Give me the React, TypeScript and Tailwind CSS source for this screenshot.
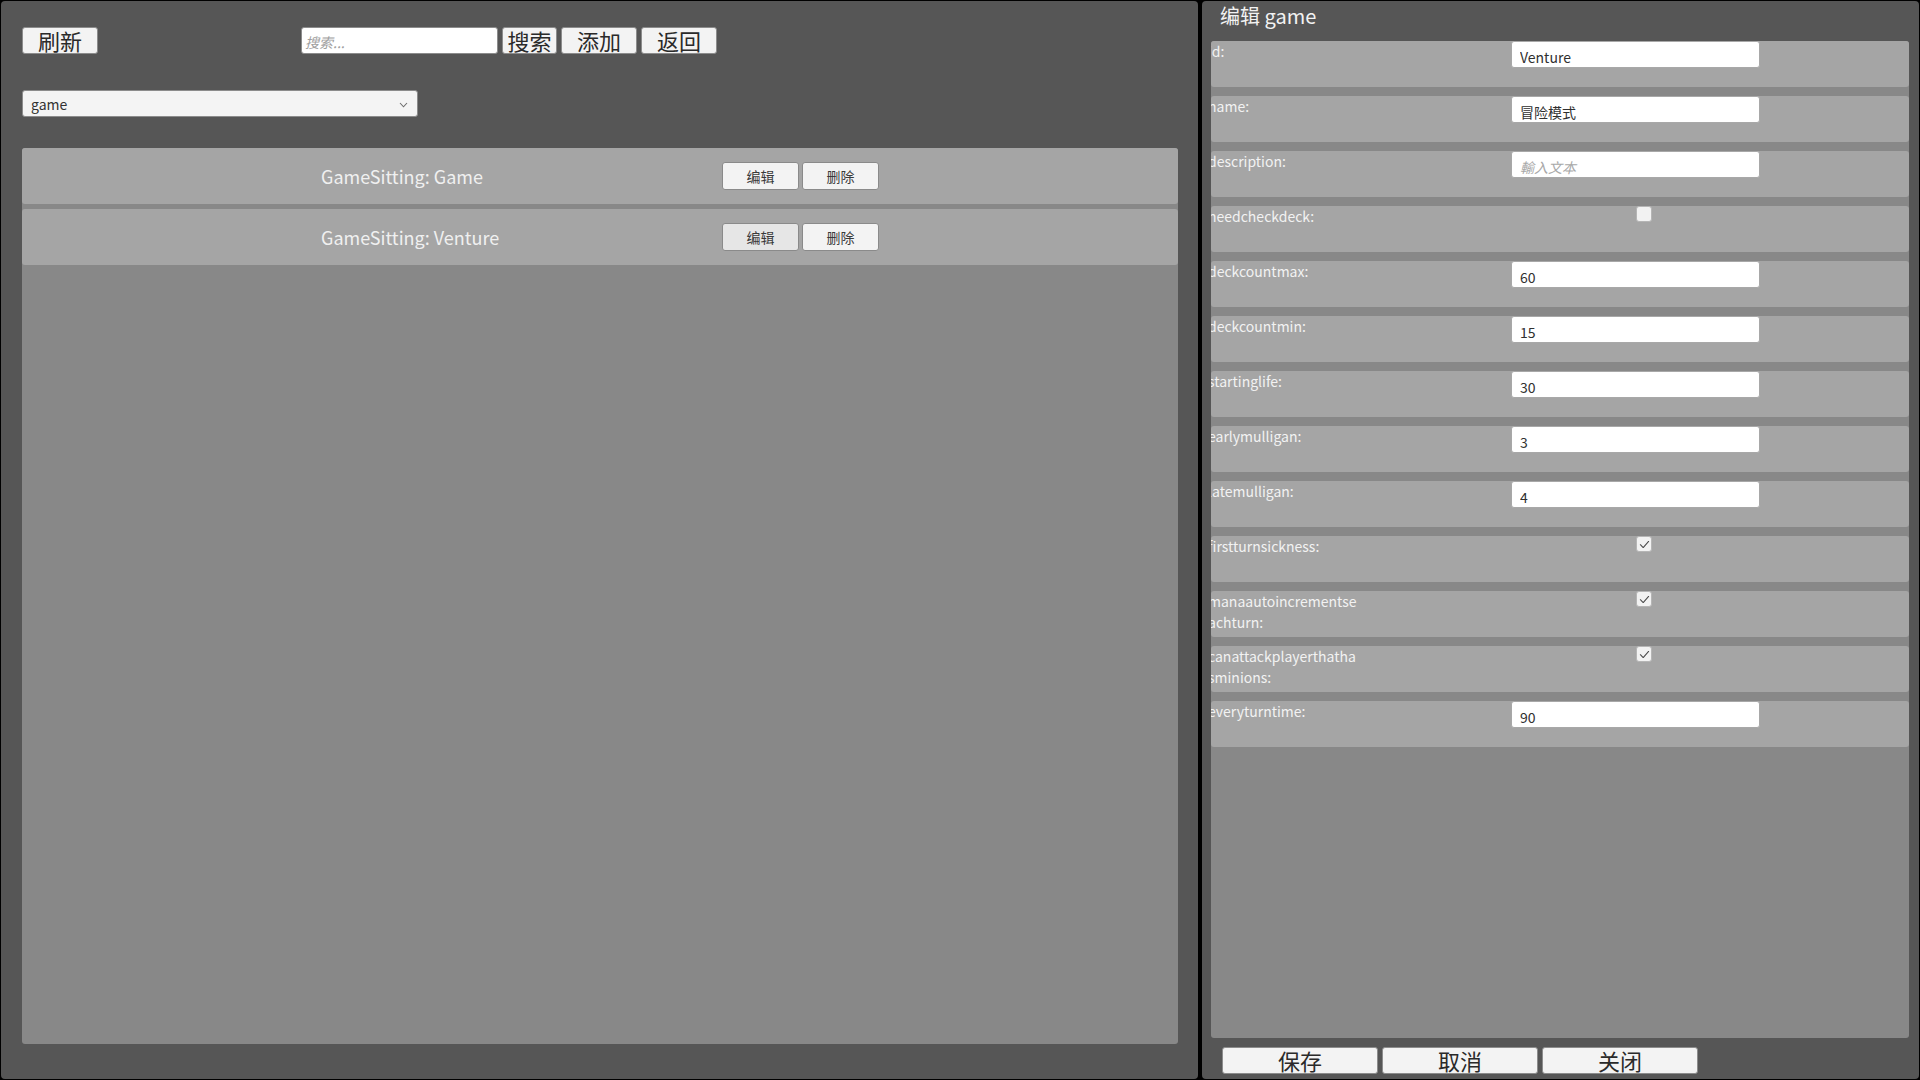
import React from 'react';

const FONT = "font-['Noto_Sans_CJK_SC',sans-serif]";

type Field = { key: string; kind: 'text' | 'check'; value?: string; placeholder?: string; checked?: boolean };

const fields: Field[] = [
  { key: 'id', kind: 'text', value: 'Venture' },
  { key: 'name', kind: 'text', value: '冒险模式' },
  { key: 'description', kind: 'text', placeholder: '輸入文本' },
  { key: 'needcheckdeck', kind: 'check', checked: false },
  { key: 'deckcountmax', kind: 'text', value: '60' },
  { key: 'deckcountmin', kind: 'text', value: '15' },
  { key: 'startinglife', kind: 'text', value: '30' },
  { key: 'earlymulligan', kind: 'text', value: '3' },
  { key: 'latemulligan', kind: 'text', value: '4' },
  { key: 'firstturnsickness', kind: 'check', checked: true },
  { key: 'manaautoincrementseachturn', kind: 'check', checked: true },
  { key: 'canattackplayerthathasminions', kind: 'check', checked: true },
  { key: 'everyturntime', kind: 'text', value: '90' },
];

const games = [
  { label: 'GameSitting: Game', hover: false },
  { label: 'GameSitting: Venture', hover: true },
];

function BigButton({ label, className = '' }: { label: string; className?: string }) {
  return (
    <button className={`h-[27px] bg-[#f3f3f3] border border-[#8c8c8c] rounded-[3px] text-[22px] leading-[22px] pb-[2px] text-[#2a2a2a] flex items-center justify-center ${className}`}>
      {label}
    </button>
  );
}

function CheckBox({ checked }: { checked?: boolean }) {
  return (
    <div className="w-[16px] h-[16px] bg-[#f2f2f2] rounded-[3px] border border-[#b5b5b5] flex items-center justify-center">
      {checked && (
        <svg width="13" height="13" viewBox="0 0 12 12" fill="none">
          <path d="M2.2 6.2 L4.8 8.8 L9.8 3.2" stroke="#4a4a4a" strokeWidth="1" strokeLinecap="round" strokeLinejoin="round" />
        </svg>
      )}
    </div>
  );
}

function FieldRow({ f }: { f: Field }) {
  return (
    <div className="h-[46px] shrink-0 bg-[#a5a5a5] rounded-[3px] flex items-start overflow-hidden">
      <div className="w-[300px] shrink-0 overflow-hidden">
        <div className="-ml-[3px] w-[152px] break-all text-[14px] leading-[21px] text-[#f2f2f2]">{f.key}:</div>
      </div>
      {f.kind === 'text' ? (
        <input
          readOnly
          defaultValue={f.value}
          placeholder={f.placeholder}
          className="w-[249px] h-[27px] bg-white rounded-[3px] border border-[#a8a8a8] pl-[8px] pt-[4px] text-[14px] text-[#303030] outline-none placeholder:italic placeholder:text-[#a8a8a8]"
        />
      ) : (
        <div className="ml-[125px]">
          <CheckBox checked={f.checked} />
        </div>
      )}
    </div>
  );
}

export default function App() {
  return (
    <div className={`w-[1920px] h-[1080px] bg-black p-[1px] flex gap-[4px] ${FONT}`}>
      {/* list side */}
      <div className="w-[1197px] h-[1078px] bg-[#565656] rounded-[4px] pl-[21px] pr-[19px] pt-[26px] flex flex-col">
        <div className="flex items-center h-[27px]">
          <BigButton label="刷新" className="w-[76px]" />
          <input
            readOnly
            placeholder="搜索..."
            className="ml-[203px] w-[197px] h-[27px] bg-white rounded-[3px] border border-[#8c8c8c] pl-[3px] pt-[2px] text-[14px] outline-none placeholder:italic placeholder:text-[#a0a0a0]"
          />
          <BigButton label="搜索" className="ml-[4px] w-[55px]" />
          <BigButton label="添加" className="ml-[4px] w-[76px]" />
          <BigButton label="返回" className="ml-[4px] w-[76px]" />
        </div>

        <div className="mt-[36px] w-[396px] h-[27px] bg-[#f4f4f4] rounded-[3px] border border-[#8c8c8c] flex items-center justify-between pl-[8px] pr-[9px] pt-[2px]">
          <span className="text-[14px] text-[#333]">game</span>
          <svg width="9" height="6" viewBox="0 0 9 6" fill="none">
            <path d="M1 1 L4.5 4.8 L8 1" stroke="#6e6e6e" strokeWidth="1.1" />
          </svg>
        </div>

        <div className="mt-[31px] w-[1156px] h-[896px] bg-[#888888] rounded-[3px] flex flex-col gap-[5px]">
          {games.map((g) => (
            <div key={g.label} className="h-[56px] bg-[#a5a5a5] rounded-[3px] flex items-center">
              <div className="w-[700px] pl-[299px] text-[18px] text-[#f0f0f0]">{g.label}</div>
              <button className={`w-[77px] h-[28px] ${g.hover ? 'bg-[#e6e6e6]' : 'bg-[#f3f3f3]'} border border-[#8a8a8a] rounded-[3px] text-[14px] text-[#3a3a3a]`}>
                编辑
              </button>
              <button className="ml-[3px] w-[77px] h-[28px] bg-[#f3f3f3] border border-[#8a8a8a] rounded-[3px] text-[14px] text-[#3a3a3a]">
                删除
              </button>
            </div>
          ))}
        </div>
      </div>

      {/* edit side */}
      <div className="w-[717px] h-[1078px] bg-[#565656] rounded-[4px] pl-[9px] pr-[10px] flex flex-col">
        <div className="h-[40px] pl-[9px] flex items-center text-[20px] text-[#f2f2f2] pb-[10px]">编辑 game</div>
        <div className="h-[997px] bg-[#888888] rounded-[3px] flex flex-col gap-[9px]">
          {fields.map((f) => (
            <FieldRow key={f.key} f={f} />
          ))}
        </div>
        <div className="mt-[9px] ml-[11px] flex gap-[4px]">
          <BigButton label="保存" className="w-[156px]" />
          <BigButton label="取消" className="w-[156px]" />
          <BigButton label="关闭" className="w-[156px]" />
        </div>
      </div>
    </div>
  );
}
